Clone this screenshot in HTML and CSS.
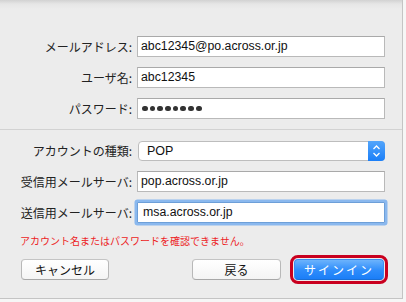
FILE: index.html
```html
<!DOCTYPE html>
<html lang="ja">
<head>
<meta charset="utf-8">
<link rel="stylesheet" href="styles.css">
</head>
<body>
<div class="dialog">
  <div class="grid top">
    <label class="lbl">メールアドレス:</label>
    <div class="field">abc12345@po.across.or.jp</div>
    <label class="lbl">ユーザ名:</label>
    <div class="field">abc12345</div>
    <label class="lbl">パスワード:</label>
    <div class="field dots"><span class="dot"></span><span class="dot"></span><span class="dot"></span><span class="dot"></span><span class="dot"></span><span class="dot"></span><span class="dot"></span><span class="dot"></span></div>
  </div>
  <div class="sep"></div>
  <div class="grid bottom">
    <label class="lbl">アカウントの種類:</label>
    <div class="popup">
      <span class="popup-text">POP</span>
      <span class="stepper">
        <svg width="9" height="14" viewBox="0 0 9 14"><path d="M1.5 5 L4.5 2 L7.5 5" fill="none" stroke="#fff" stroke-width="1.3"/><path d="M1.5 9 L4.5 12 L7.5 9" fill="none" stroke="#fff" stroke-width="1.3"/></svg>
      </span>
    </div>
    <label class="lbl">受信用メールサーバ:</label>
    <div class="field">pop.across.or.jp</div>
    <label class="lbl">送信用メールサーバ:</label>
    <div class="field focus">msa.across.or.jp</div>
  </div>
  <p class="error">アカウント名またはパスワードを確認できません。</p>
  <div class="buttons">
    <button class="btn cancel">キャンセル</button>
    <span class="spacer"></span>
    <button class="btn back">戻る</button>
    <button class="btn primary">サインイン</button>
  </div>
</div>
</body>
</html>
```
FILE: styles.css
```css
html, body {
  margin: 0;
  padding: 0;
  background: #f6f6f6;
}
body {
  width: 406px;
  height: 302px;
  overflow: hidden;
  font-family: "Noto Sans CJK JP", "Liberation Sans", sans-serif;
}
.dialog {
  box-sizing: border-box;
  width: 403px;
  height: 299px;
  border-right: 1px solid #c4c4c4;
  border-bottom: 1px solid #c4c4c4;
  background: linear-gradient(#d2d2d2 0, #e6e6e6 4px, #ececec 9px, #ececec 100%);
  padding-top: 36px;
}
.grid {
  display: grid;
  grid-template-columns: 112px 248px;
  column-gap: 5px;
  row-gap: 10px;
  padding-left: 20px;
  align-items: center;
}
.top {
  grid-template-rows: 21px 21px 21px;
}
.bottom {
  grid-template-rows: 20px 21px 21px;
  margin-top: 11px;
}
.lbl {
  font-size: 12px;
  color: #222;
  text-align: right;
  white-space: nowrap;
  line-height: 16px;
}
.field {
  box-sizing: border-box;
  height: 21px;
  background: #fff;
  border: 1px solid #b9b9b9;
  border-top-color: #a9a9a9;
  font-family: "Liberation Sans", Arial, sans-serif;
  font-size: 12.3px;
  color: #111;
  line-height: 19px;
  padding-left: 3px;
  white-space: nowrap;
}
.dots {
  display: flex;
  align-items: center;
  gap: 2px;
  padding-left: 4px;
}
.dot {
  width: 5.7px;
  height: 5.7px;
  border-radius: 50%;
  background: #333;
}
.focus {
  border: 1px solid #6d9fd8;
  border-radius: 1px;
  box-shadow: 0 0 0 2.5px #8ab8ee;
  padding-left: 5px;
}
.sep {
  margin-top: 10px;
  height: 0;
  border-top: 1px solid #d2d2d2;
}
.popup {
  box-sizing: border-box;
  height: 20px;
  display: flex;
  align-items: stretch;
  background: #fff;
  border: 1px solid #bdbdbd;
  border-radius: 4px;
  margin-left: 1px;
}
.popup-text {
  flex: 1;
  font-family: "Liberation Sans", Arial, sans-serif;
  font-size: 12.5px;
  line-height: 18px;
  padding-left: 8px;
  color: #111;
}
.stepper {
  width: 17px;
  margin: -1px -1px -1px 0;
  border-radius: 0 4px 4px 0;
  background: linear-gradient(#53a5fb, #1b7ff8);
  display: flex;
  align-items: center;
  justify-content: center;
}
.error {
  margin: 11px 0 0 20px;
  font-size: 10px;
  line-height: 14px;
  color: #ec1c24;
  white-space: nowrap;
}
.buttons {
  display: flex;
  align-items: center;
  margin-top: 11px;
  padding-left: 21px;
  padding-right: 18px;
}
.spacer {
  flex: 1;
}
.btn {
  box-sizing: border-box;
  height: 21px;
  border: 1px solid #b8b8b8;
  border-top-color: #c4c4c4;
  border-bottom-color: #a8a8a8;
  border-radius: 4px;
  background: linear-gradient(#ffffff, #f4f4f4);
  font-family: "Noto Sans CJK JP", sans-serif;
  font-size: 12px;
  color: #111;
  padding: 0;
  line-height: 18px;
}
.cancel {
  width: 88px;
}
.back {
  width: 89px;
}
.primary {
  width: 90px;
  margin-left: 13px;
  color: #fff;
  border: 1px solid #3b8cf0;
  border-bottom-color: #1a6fd6;
  background: linear-gradient(#6cb3fc, #2d8cfb 55%, #1b7ef7);
  outline: 3px solid #c9001f;
  outline-offset: 1px;
  letter-spacing: 2px;
}
```
